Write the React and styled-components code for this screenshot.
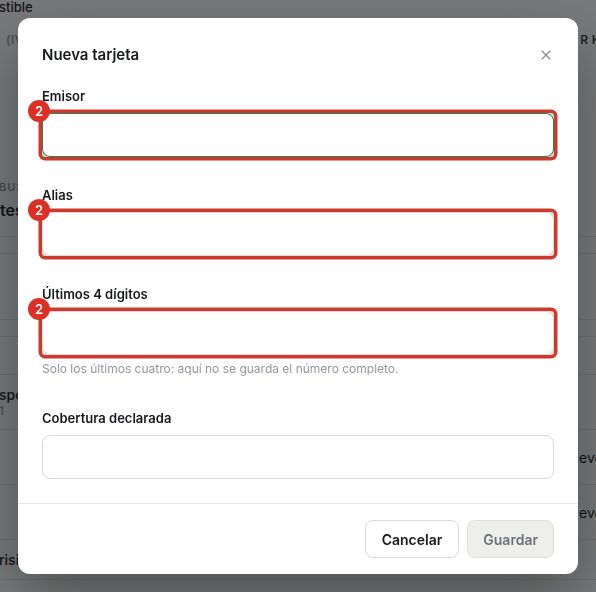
import styled, { createGlobalStyle } from 'styled-components'
import { X } from 'lucide-react'

const GlobalStyle = createGlobalStyle`
  html, body {
    margin: 0;
    padding: 0;
    height: 100%;
    background: #fff;
    font-family: Inter, "Liberation Sans", sans-serif;
    color: #17191c;
  }
  * { box-sizing: border-box; }
`

const Page = styled.div`
  height: 592px;
  overflow: hidden;
  background: #fff;
`

const TopLine = styled.div`
  font-size: 13px;
  font-weight: 500;
  line-height: 14px;
  margin-left: -1px;
`

const ColumnHeads = styled.div`
  display: flex;
  justify-content: space-between;
  margin-top: 19px;
  font-size: 12px;
  font-weight: 600;
  line-height: 14px;
  letter-spacing: 0.3px;
  color: #7b8087;
`

const HeadRight = styled.span`
  margin-right: -8px;
  color: #33373c;
`

const HeadLeft = styled.span`
  margin-left: 6px;
  color: #9a9ea4;
`

const Eyebrow = styled.div`
  margin-top: 133px;
  margin-left: -1px;
  font-size: 11px;
  font-weight: 500;
  line-height: 14px;
  letter-spacing: 1px;
  color: #8c9096;
`

const Heading = styled.div`
  margin-top: 6px;
  padding-bottom: 16px;
  font-size: 16px;
  font-weight: 600;
  line-height: 20px;
  border-bottom: 1px solid #e6e6e4;
`

const Row = styled.div`
  display: flex;
  justify-content: space-between;
  align-items: center;
  height: ${(p) => p.$h}px;
  border-bottom: 1px solid #e6e6e4;
  font-size: 14px;
  font-weight: 500;
`

const RowName = styled.div`
  margin-left: -1px;
  line-height: 18px;
`

const RowSub = styled.div`
  font-size: 12px;
  font-weight: 400;
  line-height: 14px;
  color: #8c9096;
`

const RowAction = styled.span`
  margin-right: -7px;
  font-weight: 400;
`

const Backdrop = styled.div`
  position: fixed;
  inset: 0;
  display: flex;
  align-items: center;
  justify-content: center;
  background: rgba(16, 18, 20, 0.56);
  backdrop-filter: blur(0.5px);
`

const Modal = styled.div`
  width: 560px;
  background: #fff;
  border-radius: 12px;
  box-shadow: 0 24px 64px rgba(0, 0, 0, 0.35);
`

const Header = styled.div`
  display: flex;
  align-items: center;
  justify-content: space-between;
  height: 24px;
  margin: 25px 24px 21px;
`

const Title = styled.h2`
  margin: 0;
  font-size: 15px;
  font-weight: 600;
  line-height: 24px;
`

const CloseButton = styled.button`
  display: flex;
  padding: 0;
  border: 0;
  background: none;
  color: #8a8c90;
`

const Body = styled.div`
  display: flex;
  flex-direction: column;
  gap: 30px;
  padding: 0 24px 24px;
`

const Field = styled.div`
  display: flex;
  flex-direction: column;
`

const Label = styled.label`
  margin-bottom: 9px;
  font-size: 13px;
  font-weight: 600;
  line-height: 16px;
`

const InputFrame = styled.div`
  position: relative;
  border-radius: 3px;
  background: ${(p) => p.$tint || 'transparent'};
  box-shadow: ${(p) => (p.$flagged ? '0 0 0 3.5px #cb3a2c' : 'none')};
`

const Input = styled.input`
  display: block;
  width: 100%;
  height: 44px;
  border: 1px solid ${(p) => p.$border || '#d9d9d6'};
  border-radius: 8px;
  background: #fff;
  outline: none;
`

const Badge = styled.span`
  position: absolute;
  left: -14px;
  top: -13px;
  display: flex;
  align-items: center;
  justify-content: center;
  width: 22px;
  height: 22px;
  border-radius: 50%;
  background: #dc2f26;
  color: #fff;
  font-size: 13px;
  font-weight: 600;
`

const Hint = styled.p`
  margin: 6px 0 3px;
  font-size: 12px;
  line-height: 16px;
  color: #94979c;
`

const Footer = styled.div`
  display: flex;
  justify-content: flex-end;
  gap: 8px;
  padding: 16px 24px;
  border-top: 1px solid #e6e6e4;
`

const Button = styled.button`
  height: 38px;
  padding: 0 ${(p) => (p.disabled ? 15 : 16)}px;
  border: 1px solid ${(p) => (p.disabled ? '#e0e0dc' : '#dcdcda')};
  border-radius: 8px;
  background: ${(p) => (p.disabled ? '#eeeeea' : '#fff')};
  color: ${(p) => (p.disabled ? '#6d7078' : '#17191c')};
  font-family: inherit;
  font-size: 14px;
  font-weight: 600;
`

const fields = [
  { label: 'Emisor', flagged: true, tint: '#bfe3d0', border: '#2e7d5b' },
  { label: 'Alias', flagged: true, tint: '#f6dcd9', border: '#e2d6d6' },
  {
    label: 'Últimos 4 dígitos',
    flagged: true,
    tint: '#f6dcd9',
    border: '#e2d6d6',
    hint: 'Solo los últimos cuatro: aquí no se guarda el número completo.',
  },
  { label: 'Cobertura declarada' },
]

export default function App() {
  return (
    <>
      <GlobalStyle />
      <Page>
        <TopLine>stible</TopLine>
        <ColumnHeads>
          <HeadLeft>(IV</HeadLeft>
          <HeadRight>R KI</HeadRight>
        </ColumnHeads>
        <Eyebrow>BUS</Eyebrow>
        <Heading>tes</Heading>
        <Row $h={17} />
        <Row $h={66} />
        <Row $h={17} />
        <Row $h={38} />
        <Row $h={55}>
          <RowName>
            spo
            <RowSub>1</RowSub>
          </RowName>
        </Row>
        <Row $h={55}>
          <span />
          <RowAction>evo</RowAction>
        </Row>
        <Row $h={55}>
          <span />
          <RowAction>evo</RowAction>
        </Row>
        <Row $h={40}>
          <RowName>risi</RowName>
        </Row>
      </Page>
      <Backdrop>
        <Modal>
          <Header>
            <Title>Nueva tarjeta</Title>
            <CloseButton aria-label="Cerrar">
              <X size={16} strokeWidth={1.75} />
            </CloseButton>
          </Header>
          <Body>
            {fields.map((f) => (
              <Field key={f.label}>
                <Label>{f.label}</Label>
                <InputFrame $flagged={f.flagged} $tint={f.tint}>
                  <Input $border={f.border} />
                  {f.flagged && <Badge>2</Badge>}
                </InputFrame>
                {f.hint && <Hint>{f.hint}</Hint>}
              </Field>
            ))}
          </Body>
          <Footer>
            <Button>Cancelar</Button>
            <Button disabled>Guardar</Button>
          </Footer>
        </Modal>
      </Backdrop>
    </>
  )
}
